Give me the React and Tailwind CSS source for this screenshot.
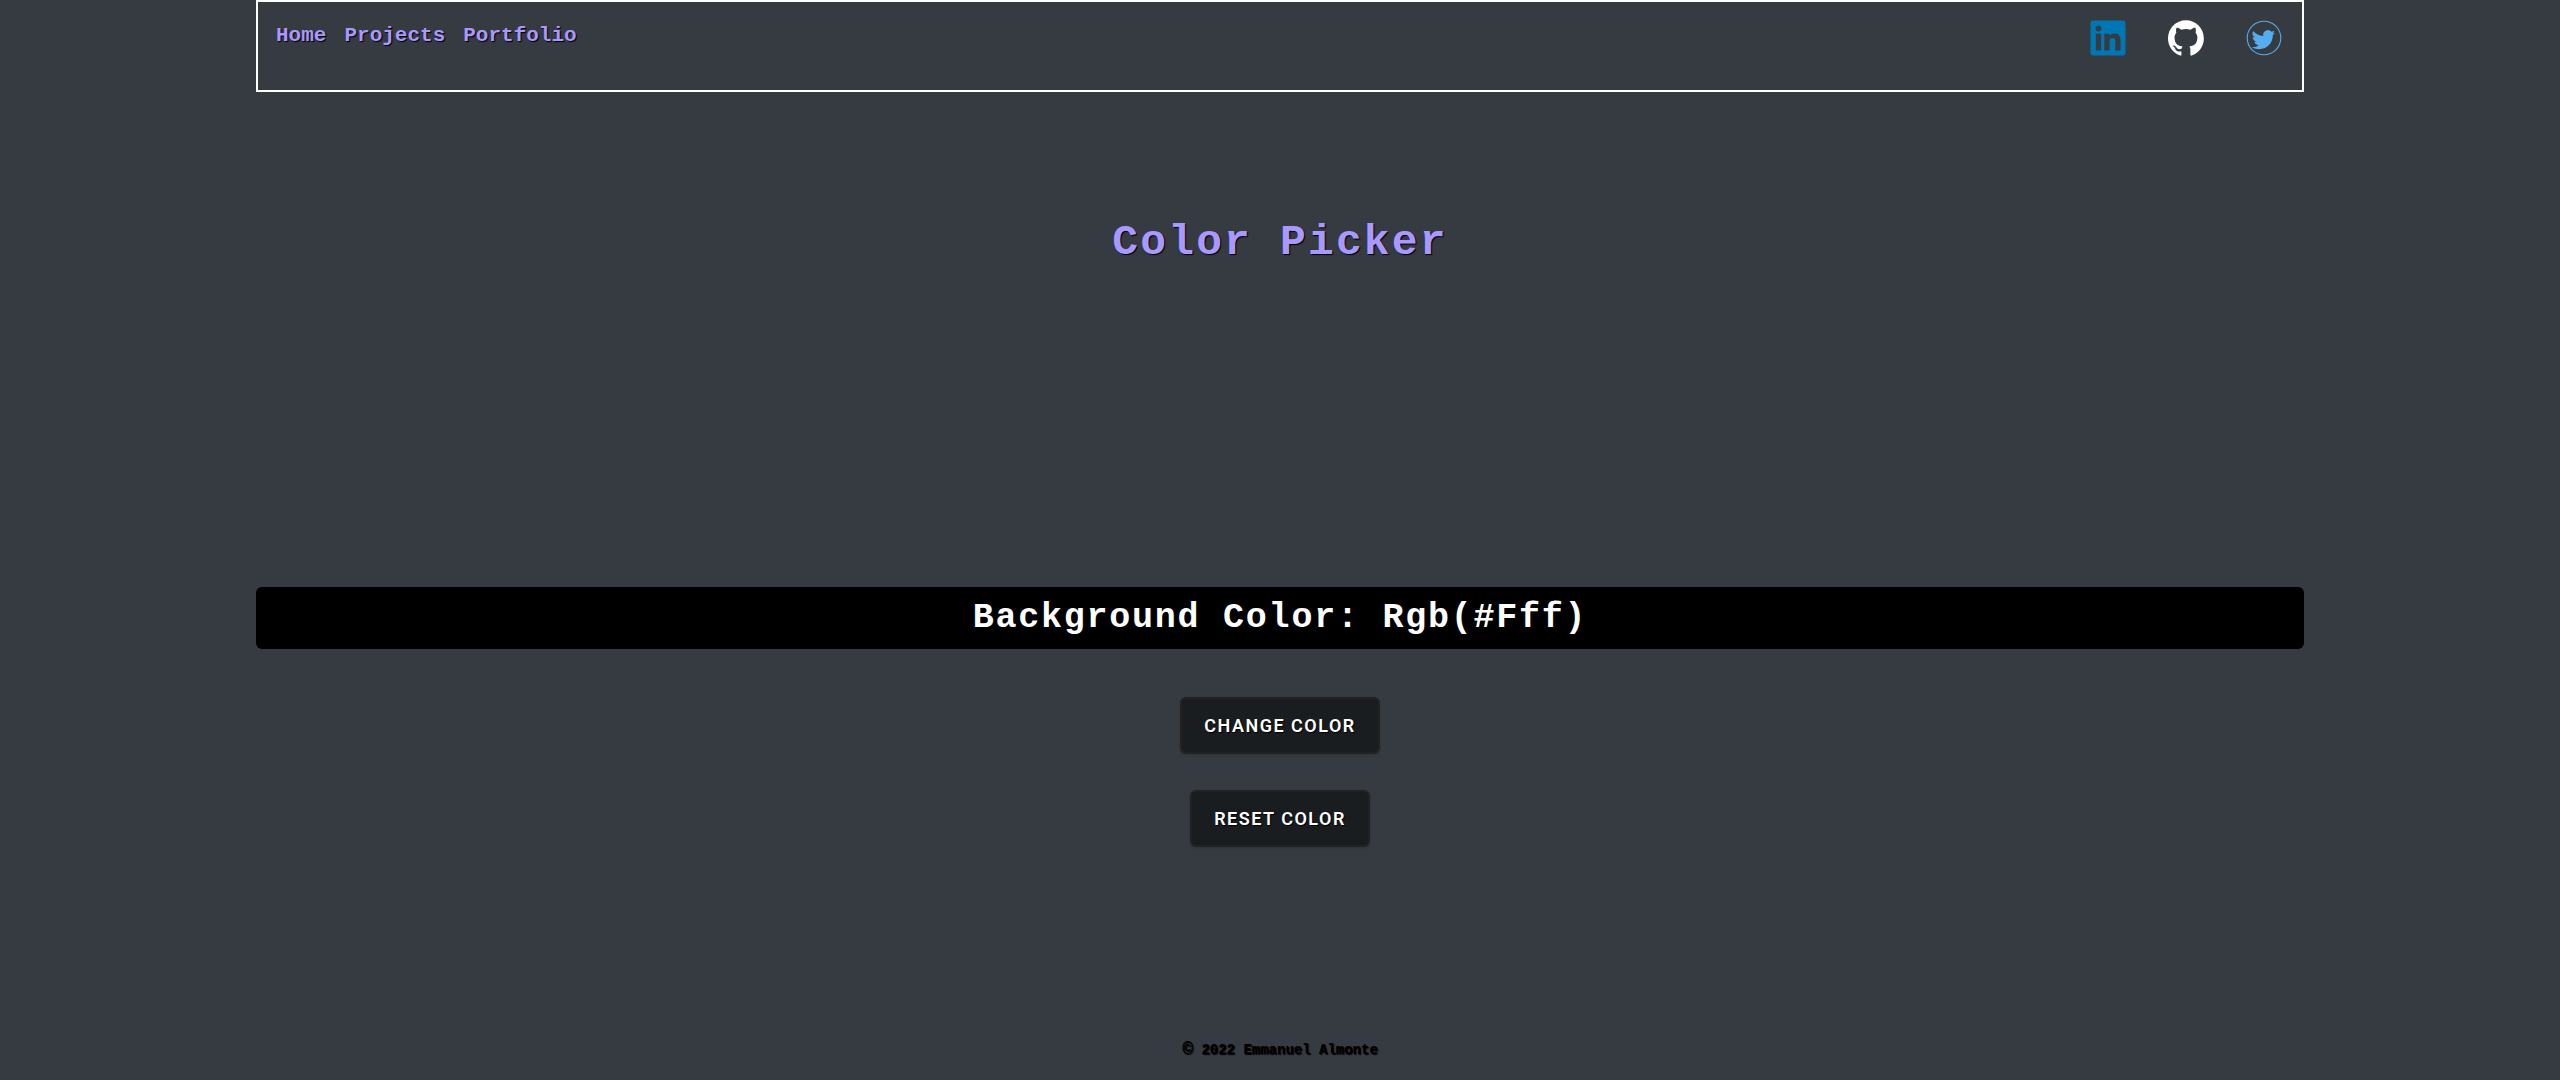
import { FaLinkedin } from "react-icons/fa";

const links = ["Home", "Projects", "Portfolio"];

function GitHubIcon() {
  return (
    <svg viewBox="0 0 98 96" className="size-9" fill="currentColor" aria-hidden="true">
      <path
        fillRule="evenodd"
        clipRule="evenodd"
        d="M48.854 0C21.839 0 0 22 0 49.217c0 21.756 13.993 40.172 33.405 46.69 2.427.49 3.316-1.059 3.316-2.362 0-1.141-.08-5.052-.08-9.127-13.59 2.934-16.42-5.867-16.42-5.867-2.184-5.704-5.42-7.17-5.42-7.17-4.448-3.015.324-3.015.324-3.015 4.934.326 7.523 5.052 7.523 5.052 4.367 7.496 11.404 5.378 14.235 4.074.404-3.178 1.699-5.378 3.074-6.6-10.839-1.141-22.243-5.378-22.243-24.283 0-5.378 1.94-9.778 5.014-13.2-.485-1.222-2.184-6.275.486-13.038 0 0 4.125-1.304 13.426 5.052a46.97 46.97 0 0 1 12.214-1.63c4.125 0 8.33.571 12.213 1.63 9.302-6.356 13.427-5.052 13.427-5.052 2.67 6.763.97 11.816.485 13.038 3.155 3.422 5.015 7.822 5.015 13.2 0 18.905-11.404 23.06-22.324 24.283 1.78 1.548 3.316 4.481 3.316 9.126 0 6.6-.08 11.897-.08 13.526 0 1.304.89 2.853 3.316 2.364 19.412-6.52 33.405-24.935 33.405-46.691C97.707 22 75.788 0 48.854 0z"
      />
    </svg>
  );
}

function TwitterIcon() {
  return (
    <svg viewBox="0 0 36 36" className="size-9" aria-hidden="true">
      <circle cx="18" cy="18" r="16.8" fill="none" stroke="#55acee" strokeWidth="1.1" />
      <path
        transform="translate(5.7 8) scale(0.98)"
        fill="#55acee"
        d="M23.95 4.57a10 10 0 0 1-2.82.77 4.96 4.96 0 0 0 2.16-2.72c-.95.56-2 .96-3.13 1.19a4.92 4.92 0 0 0-8.38 4.48C7.69 8.09 4.07 6.13 1.64 3.16a4.92 4.92 0 0 0 1.52 6.57 4.9 4.9 0 0 1-2.23-.61v.06c0 2.39 1.7 4.38 3.95 4.83a5 5 0 0 1-2.21.08 4.94 4.94 0 0 0 4.6 3.42A9.87 9.87 0 0 1 0 19.54a13.99 13.99 0 0 0 7.56 2.21c9.05 0 14-7.5 14-13.98 0-.21 0-.42-.02-.63a9.94 9.94 0 0 0 2.46-2.55z"
      />
    </svg>
  );
}

function SocialLink({ label, children }) {
  return (
    <a href="#" aria-label={label} className="flex size-10 items-center justify-center text-white">
      {children}
    </a>
  );
}

function ActionButton({ children }) {
  return (
    <button
      type="button"
      className="rounded-md border-2 border-[#222] bg-[#1a1d20] px-[22px] py-4 font-['Roboto',sans-serif] text-lg leading-[21px] font-semibold tracking-[1.5px] text-white uppercase shadow-sm [text-shadow:1px_1px_1px_#000]"
    >
      {children}
    </button>
  );
}

export default function App() {
  return (
    <div className="min-h-screen bg-[#363a41] px-[10%] font-['Liberation_Mono',monospace] font-bold">
      <header className="flex h-[92px] items-start justify-between border-2 border-white px-[18px] pt-4">
        <nav className="flex gap-[18px] text-[21px] leading-9 text-[#a898ff] [text-shadow:1px_1px_1px_#000]">
          {links.map((label) => (
            <a key={label} href="#">
              {label}
            </a>
          ))}
        </nav>
        <div className="flex gap-[38px]">
          <SocialLink label="LinkedIn">
            <FaLinkedin className="size-10 text-[#0077b5]" />
          </SocialLink>
          <SocialLink label="GitHub">
            <GitHubIcon />
          </SocialLink>
          <SocialLink label="Twitter">
            <TwitterIcon />
          </SocialLink>
        </div>
      </header>
      <main className="flex flex-col items-center">
        <h1 className="mt-[121px] text-[43px] leading-[60px] tracking-wider text-[#a898ff] [text-shadow:1px_1px_1px_#000]">
          Color Picker
        </h1>
        <h2 className="mt-[314px] w-full rounded-md bg-black text-center text-[35px] leading-[62px] tracking-wider text-white">
          Background Color: Rgb(#Fff)
        </h2>
        <div className="mt-12 flex flex-col items-center gap-9">
          <ActionButton>Change Color</ActionButton>
          <ActionButton>Reset Color</ActionButton>
        </div>
      </main>
      <footer className="mt-[190px] text-center text-sm leading-6 text-black [text-shadow:1px_1px_1px_#000]">
        <span className="text-lg leading-6">©</span> 2022 Emmanuel Almonte
      </footer>
    </div>
  );
}
